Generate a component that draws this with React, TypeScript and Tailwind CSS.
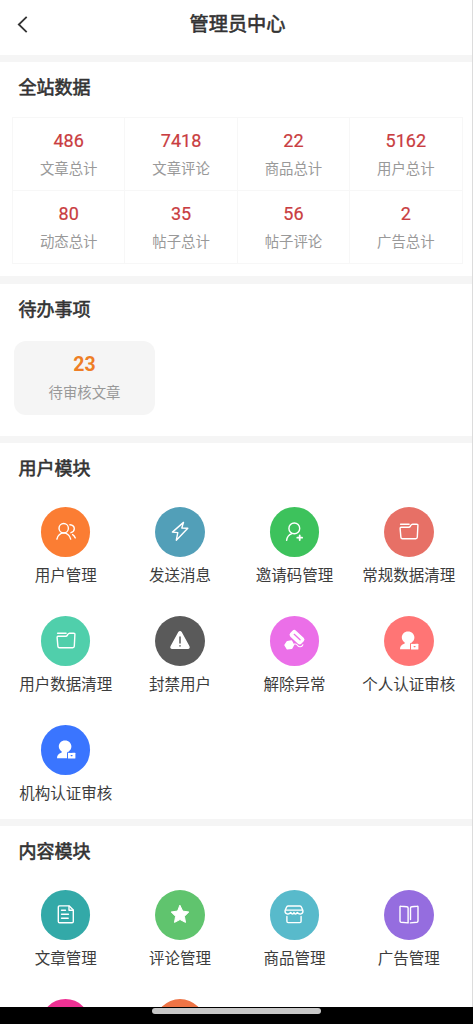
import type { ReactNode } from "react";

interface Stat {
  value: number;
  label: string;
}

interface ModuleItem {
  label: string;
  color: string;
  icon?: ReactNode;
}

const stats: Stat[] = [
  { value: 486, label: "文章总计" },
  { value: 7418, label: "文章评论" },
  { value: 22, label: "商品总计" },
  { value: 5162, label: "用户总计" },
  { value: 80, label: "动态总计" },
  { value: 35, label: "帖子总计" },
  { value: 56, label: "帖子评论" },
  { value: 2, label: "广告总计" },
];

function Icon({ children }: { children: ReactNode }) {
  return (
    <svg
      className="size-5 overflow-visible"
      viewBox="0 0 20 20"
      fill="none"
      stroke="white"
      strokeWidth={1.4}
      strokeLinecap="round"
      strokeLinejoin="round"
    >
      {children}
    </svg>
  );
}

const UsersIcon = () => (
  <Icon>
    <circle cx="7.7" cy="6.2" r="4.7" />
    <path d="M.9 17.1C1.7 13.7 4.2 11.2 7.7 10.9c3.6.3 6 2.6 7 6.2" />
    <path d="M13.9 2.8c2.6.3 4.4 1.8 4.4 4 0 1.9-1.3 3.3-3.3 3.9M16.6 12.6c1.2.7 2.1 1.8 2.7 3.3" />
  </Icon>
);

const BoltIcon = () => (
  <Icon>
    <path d="M13.5.4 2.4 10.1l5.4.5-1.5 7.6L17.8 6.2l-6-.2z" />
  </Icon>
);

const UserPlusIcon = () => (
  <Icon>
    <circle cx="10.3" cy="6.4" r="5.4" />
    <path d="M7.9 11.6c-3 1-4.9 3.5-5.3 6.8" />
    <path d="M15.7 13.3v4.8M13.3 15.7h4.8" strokeWidth={1.8} />
  </Icon>
);

const FolderIcon = () => (
  <Icon>
    <path d="M1.6 2.2h8.5" />
    <path d="M1.9 5.3h7.8c1.5 0 1.4-.8 2.1-1.9.5-.8.9-1.2 1.8-1.2h4c1 0 1.4.5 1.3 1.3l-.6 11.8c-.1 1-.6 1.4-1.5 1.4H3.4c-.9 0-1.4-.5-1.5-1.4L1.1 6.4c0-.8.2-1.1.8-1.1z" />
  </Icon>
);

const WarningIcon = () => (
  <Icon>
    <path d="M8.9 1.3c.5-.8 1.7-.8 2.2 0l7.8 14.4c.4.9-.1 1.6-1 1.6H2.1c-.9 0-1.4-.7-1-1.6z" fill="white" />
    <path d="M10 6v6M10 14.8v.1" stroke="#5a5a5a" strokeWidth={1.5} />
  </Icon>
);

const ScannerIcon = () => (
  <Icon>
    <g transform="rotate(43 13 6.2)">
      <rect x="6" y="2.8" width="14" height="6.8" rx="1.8" fill="white" />
      <path d="M9 6h8" stroke="#eb6fe8" strokeWidth={1.3} />
    </g>
    <path d="m3.3 10.6 4.2-.6 2 3.8-1.9 3.6-4.3.5-2.3-3.7z" fill="white" />
    <path d="M10.4 13.1c1.8-.5 2.7.4 3.3 1.6 1.2 1.5 4.1 1.7 5.2-1" strokeWidth={1.1} />
  </Icon>
);

// Silhueta com crachá: o furo usa a cor do círculo
const BadgeUserIcon = ({ color }: { color: string }) => (
  <Icon>
    <g stroke="none" fill="white">
      <path d="M9 .4c3.8 0 6.4 2.6 6.4 6.1 0 2.2-1.1 4-2.8 5v1.2H11v5.6H1c0-3 1.4-5 4.7-5.9v-1C4 10.3 2.8 8.5 2.8 6.5 2.8 3 5.3.4 9 .4z" />
      <rect x="11.9" y="12.8" width="7.5" height="5.6" rx=".5" />
    </g>
    <path d="M11.5 18v-5.6H16" stroke={color} strokeWidth={0.8} />
    <path d="M15.2 15.6h.8" stroke={color} strokeWidth={1.3} />
  </Icon>
);

const ArticleIcon = () => (
  <Icon>
    <path d="M3.5.9h9.8l4 4v11.5c0 .9-.4 1.3-1.3 1.3H3.5c-.8 0-1.2-.4-1.2-1.3V2.2c0-.9.4-1.3 1.2-1.3z" />
    <path d="M13 1.2v4h4M5.5 5.3h4M5.5 9.2h7M5.5 13.3h6.7" />
  </Icon>
);

const StarIcon = () => (
  <Icon>
    <path
      d="m10 .5 2.7 5.6 6.1.9-4.4 4.3 1.1 6.1-5.5-2.9-5.5 2.9 1.1-6.1L1.2 7l6.1-.9z"
      fill="white"
      strokeWidth={1}
    />
  </Icon>
);

const ShopIcon = () => (
  <Icon>
    <path d="M4 1h12c.8 0 1.2.3 1.4 1l1.5 3.6c.6 3.6-3.7 4.4-5.5 1.9-1.3 1.9-2.8 1.9-3.4 0-.6 1.9-2.1 1.9-3.4 0C4.8 10 .5 9.2 1.1 5.6L2.6 2C2.8 1.3 3.2 1 4 1zM1.8 5.1h16.4" />
    <path d="M2.9 11.4v4.9c0 .9.4 1.3 1.2 1.3h11.8c.8 0 1.2-.4 1.2-1.3v-4.9" />
  </Icon>
);

const BookIcon = () => (
  <Icon>
    <path d="M2 1.2 7.8 1.7c.9.1 1.3.4 1.3 1.2v15L2 17.2c-.7-.1-1-.4-1-1.1v-14c0-.7.3-1 1-.9z" />
    <path d="M11.4 17.9 18 17.2c.7-.1 1-.4 1-1.1v-14c0-.7-.3-1-1-.9l-5.2.5c-.9.1-1.3.4-1.3 1.2v11.7" />
  </Icon>
);

const userModules: ModuleItem[] = [
  { label: "用户管理", color: "bg-[#fb7d33]", icon: <UsersIcon /> },
  { label: "发送消息", color: "bg-[#529fb8]", icon: <BoltIcon /> },
  { label: "邀请码管理", color: "bg-[#3dc25c]", icon: <UserPlusIcon /> },
  { label: "常规数据清理", color: "bg-[#e77066]", icon: <FolderIcon /> },
  { label: "用户数据清理", color: "bg-[#50cfab]", icon: <FolderIcon /> },
  { label: "封禁用户", color: "bg-[#5a5a5a]", icon: <WarningIcon /> },
  { label: "解除异常", color: "bg-[#eb6fe8]", icon: <ScannerIcon /> },
  { label: "个人认证审核", color: "bg-[#ff7575]", icon: <BadgeUserIcon color="#ff7575" /> },
  { label: "机构认证审核", color: "bg-[#3a75ff]", icon: <BadgeUserIcon color="#3a75ff" /> },
];

const contentModules: ModuleItem[] = [
  { label: "文章管理", color: "bg-[#33a9a8]", icon: <ArticleIcon /> },
  { label: "评论管理", color: "bg-[#60c46e]", icon: <StarIcon /> },
  { label: "商品管理", color: "bg-[#58bacb]", icon: <ShopIcon /> },
  { label: "广告管理", color: "bg-[#956ddf]", icon: <BookIcon /> },
  { label: "", color: "bg-[#ee3194]" },
  { label: "", color: "bg-[#ee7446]" },
];

function SectionTitle({ children }: { children: ReactNode }) {
  return (
    <h2 className="pt-[13.4px] pl-[18.5px] text-[18px] leading-[26px] text-[#333] [-webkit-text-stroke:0.6px_#333]">
      {children}
    </h2>
  );
}

function ModuleGrid({ items }: { items: ModuleItem[] }) {
  return (
    <div className="grid grid-cols-4 pt-[25px] pr-1.5 pl-[8.5px]">
      {items.map((item, index) => (
        <div key={index} className="flex h-[109px] flex-col items-center">
          <div className={`flex size-[49.5px] shrink-0 items-center justify-center rounded-full ${item.color}`}>
            {item.icon}
          </div>
          <p className="mt-2 text-[15.5px] leading-[22px] whitespace-nowrap text-[#3c3c3c]">{item.label}</p>
        </div>
      ))}
    </div>
  );
}

export default function App() {
  return (
    <div className="flex h-[1024px] w-[473px] flex-col overflow-hidden bg-black font-[Roboto,'Noto_Sans_CJK_SC',sans-serif]">
      <div className="h-[1007px] shrink-0 overflow-hidden border-r border-[#dcdcdc] bg-[#f5f5f5]">
        <header className="grid h-[54.5px] grid-cols-[40px_1fr_40px] bg-white pt-[11px]">
          <button type="button" className="flex h-[27px] items-center pl-[17px]" aria-label="返回">
            <svg className="h-[17px] w-[11px]" viewBox="0 0 11 17" fill="none" stroke="#333" strokeWidth={1.8}>
              <path d="M9.7.8 1.8 8.5l7.9 7.7" />
            </svg>
          </button>
          <h1 className="pl-[3px] text-center text-[19.2px] leading-7 text-[#333] [-webkit-text-stroke:0.6px_#333]">
            管理员中心
          </h1>
        </header>

        <section className="mt-[7px] h-[214.5px] bg-white">
          <SectionTitle>全站数据</SectionTitle>
          <div className="mt-4 mr-[9.5px] ml-3 grid grid-cols-4 border-t border-l border-[#f7f7f7]">
            {stats.map((stat) => (
              <div
                key={stat.label}
                className="flex h-[73px] flex-col items-center border-r border-b border-[#f7f7f7] pt-[11px]"
              >
                <span className="text-[18px] leading-6 text-[#c93d41] [-webkit-text-stroke:0.2px_#c93d41]">
                  {stat.value}
                </span>
                <span className="mt-[7px] text-[14.4px] leading-5 text-[#999]">{stat.label}</span>
              </div>
            ))}
          </div>
        </section>

        <section className="mt-[7.5px] h-[152px] bg-white">
          <SectionTitle>待办事项</SectionTitle>
          <div className="mt-[18px] ml-3.5 flex h-[74px] w-[141px] flex-col items-center rounded-xl bg-[#f5f5f5] pt-3">
            <span className="text-[19.5px] leading-6 font-bold text-[#ee7e26]">23</span>
            <span className="mt-[7.5px] text-[14.4px] leading-5 text-[#999]">待审核文章</span>
          </div>
        </section>

        <section className="mt-[7.5px] h-[375.5px] bg-white">
          <SectionTitle>用户模块</SectionTitle>
          <ModuleGrid items={userModules} />
        </section>

        <section className="mt-[7.5px] bg-white">
          <SectionTitle>内容模块</SectionTitle>
          <ModuleGrid items={contentModules} />
        </section>
      </div>

      <div className="flex flex-1 justify-center pt-px">
        <div className="h-1.5 w-[169px] rounded-full bg-[#c8c8c8]" />
      </div>
    </div>
  );
}
